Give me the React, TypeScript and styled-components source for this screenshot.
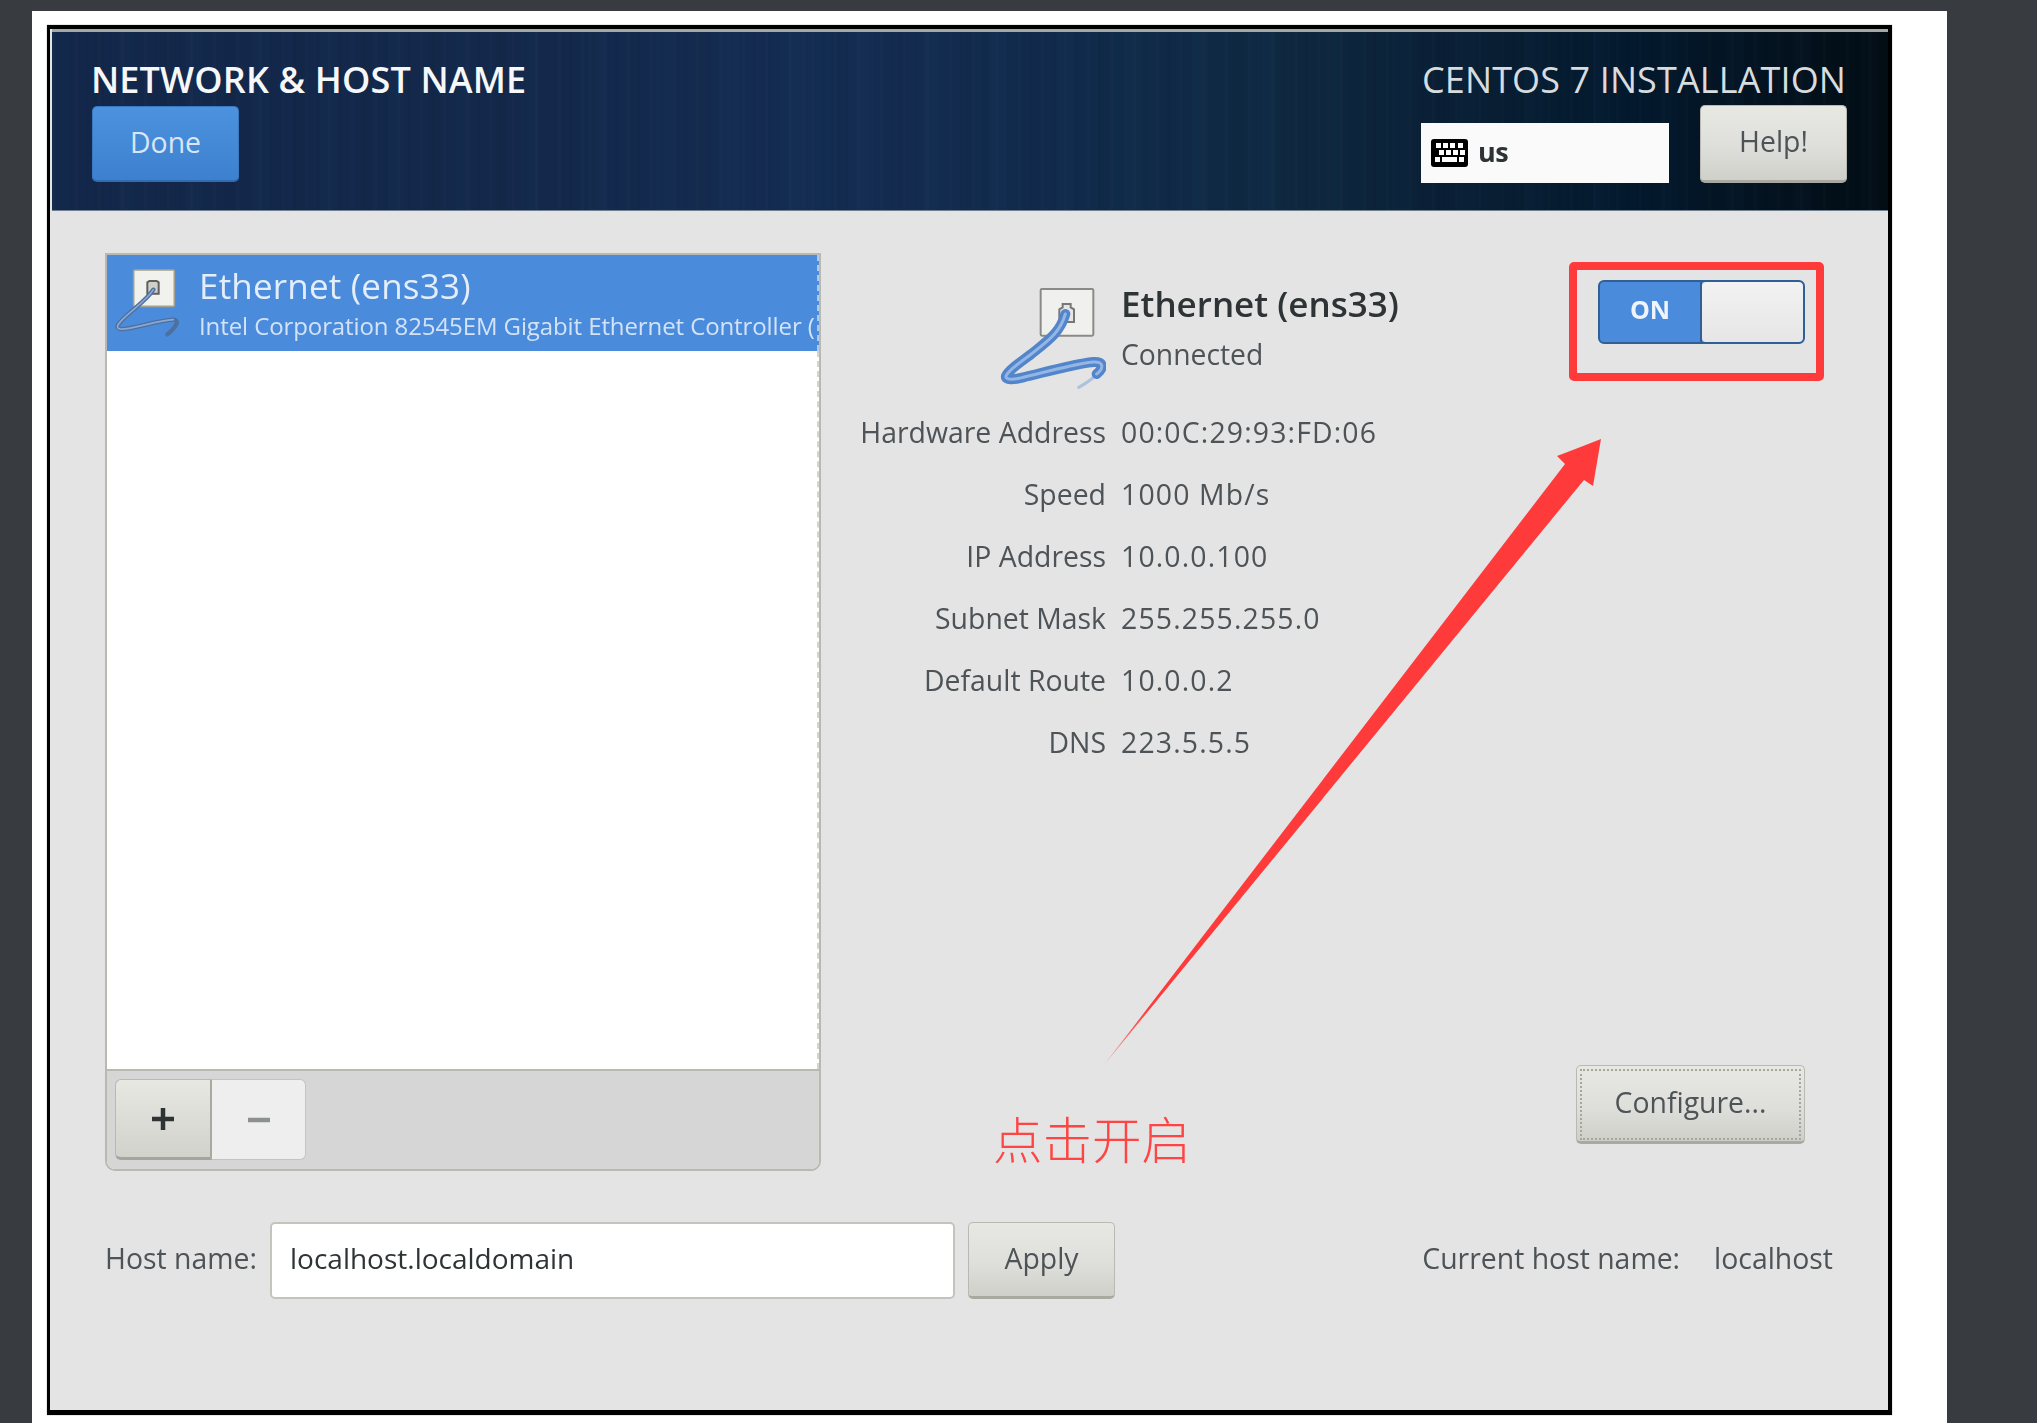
import React from "react";
import styled, { createGlobalStyle } from "styled-components";

const Global = createGlobalStyle`
  html, body { margin: 0; padding: 0; background: #383b3f; }
  body { font-family: "Open Sans", "Noto Sans", sans-serif; }
  #root { width: 2037px; height: 1423px; overflow: hidden; }
  * { box-sizing: border-box; }
`;

const Page = styled.div`
  width: 2037px;
  height: 1423px;
  padding: 11px 90px 0 32px;
  background: #383b3f;
`;

const Sheet = styled.div`
  height: 1412px;
  background: #fff;
  padding: 14px 55px 8px 15px;
`;

const Frame = styled.div`
  height: 1390px;
  background: #e4e4e4;
  border-style: solid;
  border-color: #000;
  border-width: 4px 4px 5px 3px;
  display: flex;
  flex-direction: column;
  box-shadow: 0 0 1px #777;
  filter: blur(0.5px);
`;

const Header = styled.header`
  height: 182px;
  flex: none;
  display: flex;
  justify-content: space-between;
  padding: 31px 40px 0 39px;
  margin-left: 2px;
  border-top: 3px solid #a3a8ab;
  border-bottom: 1px solid #6f7f8c;
  background:
    repeating-linear-gradient(90deg, rgba(255,255,255,.012) 0 3px, transparent 3px 11px, rgba(0,0,0,.03) 11px 14px, transparent 14px 23px),
    repeating-linear-gradient(90deg, rgba(90,130,190,.018) 0 17px, transparent 17px 41px, rgba(0,0,0,.025) 41px 52px, transparent 52px 67px),
    linear-gradient(90deg, #12274a 0%, #13284a 25%, #142c52 40%, #102a4a 58%, #0e2840 68%, #0a2036 75%, #031a2f 85%, #03121f 94%, #020d14 100%);
`;

const HeaderColumn = styled.div`
  display: flex;
  flex-direction: column;
`;

const HeaderRightColumn = styled(HeaderColumn)`
  width: 426px;
`;

const ScreenTitle = styled.h1`
  margin: 0;
  height: 34px;
  line-height: 34px;
  font-size: 36px;
  font-weight: 600;
  color: #f6f7f8;
  white-space: nowrap;
  letter-spacing: 0.15px;
`;

const ProductTitle = styled.div`
  height: 34px;
  line-height: 34px;
  font-size: 36px;
  color: #d8dcdf;
  white-space: nowrap;
  letter-spacing: 0.12px;
`;

const PushButton = styled.button<{ $width: number; $height: number }>`
  width: ${(p) => p.$width}px;
  height: ${(p) => p.$height}px;
  flex: none;
  padding: 0 0 4px;
  font-family: inherit;
  font-size: 28.4px;
  color: #4d5356;
  background: linear-gradient(180deg, #e8e8e3 0%, #dededb 55%, #d0d0ca 100%);
  border: 1px solid #b9b9b2;
  border-bottom: 3px solid #a9a9a2;
  border-radius: 5px;
`;

const DoneButton = styled(PushButton)`
  margin-top: 9px;
  margin-left: 1px;
  color: #d9e6f5;
  background: linear-gradient(180deg, #4d92de 0%, #3c80cf 100%);
  border: 1px solid #3a78c0;
  border-bottom: 2px solid #2f6cb2;
`;

const KeyboardRow = styled.div`
  margin-top: 8px;
  display: flex;
  align-items: flex-end;
  gap: 31px;
  margin-left: -1px;
`;

const LayoutBox = styled.div`
  width: 248px;
  height: 60px;
  background: #fafafa;
  display: flex;
  align-items: center;
  gap: 10px;
  padding: 0 0 0 10px;
`;

const LayoutName = styled.span`
  font-size: 27px;
  font-weight: 700;
  color: #2e3436;
  letter-spacing: -0.5px;
  margin-bottom: 4px;
`;

const Body = styled.main`
  flex: 1;
  margin-left: 2px;
  padding: 42px 0 0 53px;
  display: flex;
  flex-direction: column;
`;

const Columns = styled.div`
  height: 918px;
  display: flex;
`;

const ListPanel = styled.section`
  width: 716px;
  flex: none;
  display: flex;
  flex-direction: column;
  border: 2px solid #b9b9b2;
  border-radius: 0 0 10px 10px;
  overflow: hidden;
  background: #fff;
`;

const DeviceRow = styled.div`
  height: 96px;
  flex: none;
  display: flex;
  gap: 9px;
  background: #4a8bdb;
  overflow: hidden;
  white-space: nowrap;
  border-right: 2px dashed rgba(255, 255, 255, 0.55);
`;

const RowIcon = styled.svg`
  width: 83px;
  height: 80px;
  flex: none;
  margin-top: 2px;
`;

const RowText = styled.div`
  display: flex;
  flex-direction: column;
  padding-top: 11px;
  color: #e3eefa;
  min-width: 0;
`;

const RowName = styled.div`
  font-size: 35px;
  line-height: 40px;
  letter-spacing: 0.2px;
`;

const RowDetail = styled.div`
  font-size: 24px;
  line-height: 40px;
  color: #d3e3f7;
  letter-spacing: -0.1px;
`;

const ListFill = styled.div`
  flex: 1;
  background: #fff;
  border-right: 2px dashed #d4d4d0;
`;

const ListToolbar = styled.div`
  height: 100px;
  flex: none;
  background: #d6d6d6;
  border-top: 2px solid #b9b9b2;
  padding: 8px 0 0 8px;
  display: flex;
`;

const SegmentAdd = styled.button`
  width: 97px;
  height: 81px;
  padding: 0;
  border: 1px solid #b9b9b2;
  border-bottom: 3px solid #a5a59e;
  border-right: 2px solid #a9a9a2;
  border-radius: 6px 0 0 6px;
  background: linear-gradient(180deg, #e8e8e3 0%, #d2d2cc 100%);
  display: flex;
  align-items: center;
  justify-content: center;
`;

const SegmentRemove = styled(SegmentAdd)`
  width: 94px;
  border: 1px solid #c4c4be;
  border-left: none;
  border-radius: 0 6px 6px 0;
  background: #eeeeee;
`;

const Glyph = styled.svg`
  width: 24px;
  height: 24px;
`;

const DetailPane = styled.section`
  flex: 1;
  position: relative;
  display: flex;
  flex-direction: column;
  padding: 27px 83px 27px 0;
`;

const DetailTop = styled.div`
  display: flex;
  height: 120px;
`;

const DetailIconCell = styled.div`
  width: 285px;
  flex: none;
  display: flex;
  justify-content: flex-end;
`;

const DetailIcon = styled.svg`
  width: 111px;
  height: 120px;
`;

const DetailHeading = styled.div`
  margin-left: 15px;
  padding-top: 4px;
  display: flex;
  flex-direction: column;
  gap: 10px;
`;

const DetailName = styled.div`
  font-size: 35px;
  line-height: 40px;
  font-weight: 600;
  color: #2e3436;
  white-space: nowrap;
`;

const DetailState = styled.div`
  font-size: 28.3px;
  line-height: 40px;
  color: #4d5356;
`;

const Toggle = styled.div`
  margin-left: auto;
  width: 207px;
  height: 64px;
  flex: none;
  display: flex;
  border: 2px solid #2f5f94;
  border-radius: 6px;
  background: #4a8bdb;
  overflow: hidden;
`;

const ToggleLabel = styled.div`
  width: 102px;
  padding-bottom: 6px;
  display: flex;
  align-items: center;
  justify-content: center;
  color: #eef4fb;
  font-size: 25px;
  font-weight: 700;
  border-right: 2px solid #2f5f94;
`;

const ToggleKnob = styled.div`
  flex: 1;
  background: linear-gradient(180deg, #f2f2f2 0%, #e6e6e6 100%);
  border-radius: 4px;
`;

const InfoGrid = styled.dl`
  margin: 1px 0 0 0;
  display: grid;
  grid-template-columns: 285px auto;
  column-gap: 15px;
  grid-auto-rows: 62px;
  align-items: center;
  font-size: 28.4px;
  color: #4d5356;
`;

const InfoLabel = styled.dt`
  text-align: right;
  white-space: nowrap;
`;

const InfoValue = styled.dd`
  margin: 0;
  white-space: nowrap;
  letter-spacing: 1.15px;
`;

const ConfigureButton = styled(PushButton)`
  margin-top: auto;
  margin-right: 0;
  align-self: flex-end;
  outline: 2px dotted #a6a69f;
  outline-offset: -6px;
`;

const HostRow = styled.div`
  margin-top: 50px;
  display: flex;
  align-items: center;
  height: 79px;
  padding-right: 55px;
  font-size: 28.4px;
  color: #4d5356;
`;

const HostLabel = styled.label`
  width: 165px;
  flex: none;
  padding-bottom: 6px;
  white-space: nowrap;
`;

const HostInput = styled.input`
  width: 685px;
  height: 77px;
  flex: none;
  padding: 0 18px 5px;
  border: 2px solid #c4c4be;
  border-radius: 5px;
  background: #fff;
  font-family: inherit;
  font-size: 28px;
  color: #2e3436;
  outline: none;
`;

const ApplyButton = styled(PushButton)`
  margin-left: 13px;
`;

const CurrentHost = styled.div`
  margin-left: auto;
  padding-bottom: 6px;
  display: flex;
  gap: 34px;
  white-space: nowrap;
`;

const ArrowOverlay = styled.svg`
  position: absolute;
  left: 281px;
  top: 184px;
  width: 502px;
  height: 632px;
`;

const Highlight = styled.div`
  position: absolute;
  left: 748px;
  top: 9px;
  width: 255px;
  height: 119px;
  border: 8px solid #ff3a3a;
  border-radius: 5px;
`;

const Annotation = styled.div`
  position: absolute;
  left: 172px;
  top: 855px;
  font-family: "Noto Sans CJK SC", sans-serif;
  font-size: 49.5px;
  font-weight: 300;
  line-height: 60px;
  color: #ff4444;
  white-space: nowrap;
`;

const DetailCable = () => (
  <g>
    <rect x="182" y="57" width="158" height="140" rx="4" fill="#f0f0ee" stroke="#8b8b86" strokeWidth="6" />
    <path
      d="M238 118 l10 -6 v-10 h24 v10 l10 6 v38 h-44z"
      fill="#e6e6e4"
      stroke="#77777a"
      strokeWidth="6"
    />
    <path d="M362 300 C345 322 322 338 296 352" fill="none" stroke="#7fa5da" strokeWidth="9" strokeLinecap="round" opacity="0.55" />
    <path
      d="M256 132 C240 190 200 215 150 255 C120 278 85 300 78 318 C75 330 100 330 130 322 C190 308 280 282 340 276 C372 274 372 295 350 312"
      fill="none"
      stroke="#5285c9"
      strokeWidth="30"
      strokeLinecap="round"
    />
    <path
      d="M256 132 C240 190 200 215 150 255 C120 278 85 300 78 318 C75 330 100 330 130 322 C190 308 280 282 340 276 C372 274 372 295 350 312"
      fill="none"
      stroke="#93b6e6"
      strokeWidth="9"
      strokeLinecap="round"
    />
  </g>
);

const RowCable = () => (
  <g>
    <rect x="131" y="89" width="122" height="109" rx="3" fill="#f1f1ee" stroke="#a6a28e" strokeWidth="5" />
    <path d="M172 126 l6 -4 h22 l6 4 v34 h-34z" fill="#cfcfcc" stroke="#5f5f60" strokeWidth="6" />
    <path
      d="M190 148 C170 180 130 205 100 235 C85 250 75 262 90 266 C120 270 200 240 250 238 C268 238 262 258 232 282"
      fill="none"
      stroke="#4f6f9f"
      strokeWidth="13"
      strokeLinecap="round"
    />
    <path
      d="M190 148 C170 180 130 205 100 235 C85 250 75 262 90 266 C120 270 200 240 250 238"
      fill="none"
      stroke="#8aa8d2"
      strokeWidth="5"
      strokeLinecap="round"
    />
  </g>
);

const KeyboardIcon = () => (
  <svg width="37" height="28" viewBox="0 0 37 28">
    <rect width="37" height="28" rx="3" fill="#000" />
    <g fill="#fff">
      {[5, 12, 19, 27].map((x) => <rect key={x} x={x} y="4" width="5" height="5" />)}
      {[8, 15, 22, 29].map((x) => <rect key={x} x={x} y="11" width="5" height="5" />)}
      <rect x="4" y="18" width="5" height="5" />
      <rect x="11" y="18" width="15" height="5" />
      <rect x="28" y="18" width="5" height="5" />
    </g>
  </svg>
);

const details: [string, string][] = [
  ["Hardware Address", "00:0C:29:93:FD:06"],
  ["Speed", "1000 Mb/s"],
  ["IP Address", "10.0.0.100"],
  ["Subnet Mask", "255.255.255.0"],
  ["Default Route", "10.0.0.2"],
  ["DNS", "223.5.5.5"],
];

export default function App() {
  return (
    <Page>
      <Global />
      <Sheet>
        <Frame>
          <Header>
            <HeaderColumn>
              <ScreenTitle>NETWORK &amp; HOST NAME</ScreenTitle>
              <DoneButton $width={147} $height={76}>Done</DoneButton>
            </HeaderColumn>
            <HeaderRightColumn>
              <ProductTitle>CENTOS 7 INSTALLATION</ProductTitle>
              <KeyboardRow>
                <LayoutBox>
                  <KeyboardIcon />
                  <LayoutName>us</LayoutName>
                </LayoutBox>
                <PushButton $width={147} $height={78}>Help!</PushButton>
              </KeyboardRow>
            </HeaderRightColumn>
          </Header>
          <Body>
            <Columns>
              <ListPanel>
                <DeviceRow>
                  <RowIcon viewBox="51 50 249 240">
                    <RowCable />
                  </RowIcon>
                  <RowText>
                    <RowName>Ethernet (ens33)</RowName>
                    <RowDetail>Intel Corporation 82545EM Gigabit Ethernet Controller (</RowDetail>
                  </RowText>
                </DeviceRow>
                <ListFill />
                <ListToolbar>
                  <SegmentAdd aria-label="Add">
                    <Glyph viewBox="0 0 24 24">
                      <path d="M12 1v22M1 12h22" stroke="#2e3436" strokeWidth="4.5" />
                    </Glyph>
                  </SegmentAdd>
                  <SegmentRemove aria-label="Remove">
                    <Glyph viewBox="0 0 24 24">
                      <path d="M1 12h22" stroke="#8b9093" strokeWidth="4.5" />
                    </Glyph>
                  </SegmentRemove>
                </ListToolbar>
              </ListPanel>
              <DetailPane>
                <DetailTop>
                  <DetailIconCell>
                    <DetailIcon viewBox="45 30 333 360">
                      <DetailCable />
                    </DetailIcon>
                  </DetailIconCell>
                  <DetailHeading>
                    <DetailName>Ethernet (ens33)</DetailName>
                    <DetailState>Connected</DetailState>
                  </DetailHeading>
                  <Toggle>
                    <ToggleLabel>ON</ToggleLabel>
                    <ToggleKnob />
                  </Toggle>
                </DetailTop>
                <InfoGrid>
                  {details.map(([k, v]) => (
                    <React.Fragment key={k}>
                      <InfoLabel>{k}</InfoLabel>
                      <InfoValue>{v}</InfoValue>
                    </React.Fragment>
                  ))}
                </InfoGrid>
                <ConfigureButton $width={229} $height={79}>Configure...</ConfigureButton>
                <ArrowOverlay viewBox="1102 437 502 632">
                  <defs>
                    <linearGradient id="arrowFade" gradientUnits="userSpaceOnUse" x1="1104" y1="1065" x2="1150" y2="1010">
                      <stop offset="0" stopColor="#ff3a3a" stopOpacity="0.4" />
                      <stop offset="1" stopColor="#ff3a3a" />
                    </linearGradient>
                  </defs>
                  <polygon
                    points="1104,1065 1584,480 1593,486 1601,439 1557,456 1565,464"
                    fill="url(#arrowFade)"
                  />
                </ArrowOverlay>
                <Highlight />
                <Annotation>点击开启</Annotation>
              </DetailPane>
            </Columns>
            <HostRow>
              <HostLabel>Host name:</HostLabel>
              <HostInput readOnly value="localhost.localdomain" />
              <ApplyButton $width={147} $height={77}>Apply</ApplyButton>
              <CurrentHost>
                <span>Current host name:</span>
                <span>localhost</span>
              </CurrentHost>
            </HostRow>
          </Body>
        </Frame>
      </Sheet>
    </Page>
  );
}
